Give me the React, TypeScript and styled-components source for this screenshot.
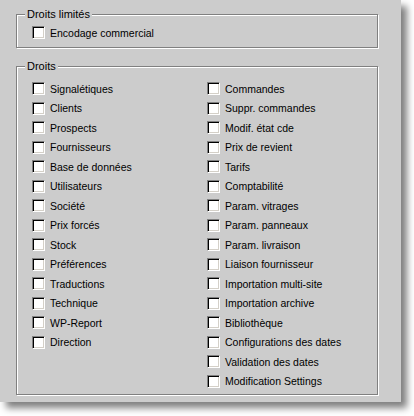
import styled, { createGlobalStyle } from "styled-components";

const GlobalStyle = createGlobalStyle`
  html, body {
    margin: 0;
    background: #ffffff;
    font-family: "Liberation Sans", Arial, sans-serif;
    font-size: 10.5px;
    color: #000000;
  }
`;

const Page = styled.div`
  width: 414px;
  height: 416px;
  overflow: hidden;
`;

const Panel = styled.div`
  width: 401px;
  height: 402px;
  box-sizing: border-box;
  background: #cccccc;
  padding: 14px 0 0 16px;
  box-shadow: 6px 6px 7px rgba(0, 0, 0, 0.5);
  display: flex;
  flex-direction: column;
  gap: 18px;
`;

const Group = styled.div<{ $height: number; $padTop: number }>`
  position: relative;
  width: 362px;
  height: ${({ $height }) => $height}px;
  flex: none;
  box-sizing: border-box;
  border: 1px solid #808080;
  box-shadow: inset 1px 1px 0 #ffffff, 1px 1px 0 #ffffff;
  padding: ${({ $padTop }) => $padTop}px 0 0 15px;
`;

const Caption = styled.span`
  position: absolute;
  top: -7px;
  left: 8px;
  padding: 0 2px;
  line-height: 13px;
  font-size: 11px;
  background: #cccccc;
`;

const Columns = styled.div`
  display: grid;
  grid-template-columns: 175px 1fr;
`;

const Column = styled.div`
  display: flex;
  flex-direction: column;
`;

const Row = styled.label`
  display: flex;
  align-items: center;
  gap: 5px;
  height: 19.5px;
  white-space: nowrap;
`;

const Box = styled.span`
  width: 13px;
  height: 13px;
  box-sizing: border-box;
  flex: none;
  background: #ffffff;
  border: 1px solid;
  border-color: #808080 #ffffff #ffffff #808080;
  box-shadow: inset 1px 1px 0 #000000, inset -1px -1px 0 #d4d0c8;
`;

const left = [
  "Signalétiques",
  "Clients",
  "Prospects",
  "Fournisseurs",
  "Base de données",
  "Utilisateurs",
  "Société",
  "Prix forcés",
  "Stock",
  "Préférences",
  "Traductions",
  "Technique",
  "WP-Report",
  "Direction",
];

const right = [
  "Commandes",
  "Suppr. commandes",
  "Modif. état cde",
  "Prix de revient",
  "Tarifs",
  "Comptabilité",
  "Param. vitrages",
  "Param. panneaux",
  "Param. livraison",
  "Liaison fournisseur",
  "Importation multi-site",
  "Importation archive",
  "Bibliothèque",
  "Configurations des dates",
  "Validation des dates",
  "Modification Settings",
];

const Check = ({ label }: { label: string }) => (
  <Row>
    <Box />
    <span>{label}</span>
  </Row>
);

const App = () => {
  return (
    <Page>
      <GlobalStyle />
      <Panel>
        <Group $height={34} $padTop={8}>
          <Caption>Droits limités</Caption>
          <Check label="Encodage commercial" />
        </Group>
        <Group $height={329} $padTop={12}>
          <Caption>Droits</Caption>
          <Columns>
            <Column>
              {left.map((l) => (
                <Check key={l} label={l} />
              ))}
            </Column>
            <Column>
              {right.map((l) => (
                <Check key={l} label={l} />
              ))}
            </Column>
          </Columns>
        </Group>
      </Panel>
    </Page>
  );
};

export default App;
